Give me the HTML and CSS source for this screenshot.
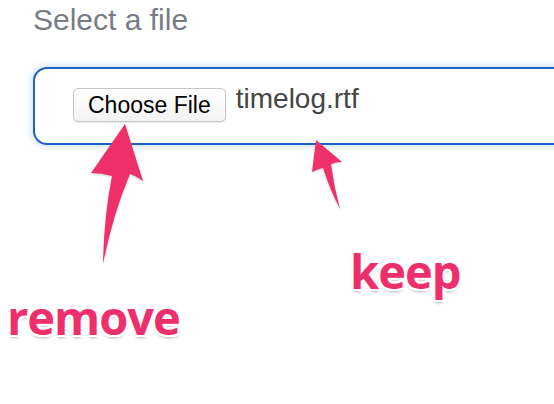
FILE: index.html
```html
<!DOCTYPE html>
<html lang="en">
<head>
    <meta charset="UTF-8">
    <meta name="viewport" content="width=device-width, initial-scale=1.0">
    <title>Select a file</title>
    <link rel="stylesheet" href="styles.css">
</head>
<body>
    <div class="page">
        <h2 class="fieldLabel">Select a file</h2>
        <div class="fileBox">
            <span class="chooseBtn">Choose File</span>
            <span class="fileName">timelog.rtf</span>
        </div>

        <!-- annotation layer -->
        <svg class="arrows" width="554" height="404" viewBox="0 0 554 404">
            <path d="M125,124 L143,181 Q136,176 130,174 Q113,214 103,264 Q104,216 112,176 Q101,173 91,173 Z"/>
            <path d="M316,140 L342,162 Q336,162 331,164 Q334,187 340,209 Q330,190 323,168 Q318,169 312,172 Z"/>
        </svg>
        <span class="note noteRemove">remove</span>
        <span class="note noteKeep">keep</span>
    </div>
</body>
</html>
```

FILE: styles.css
```css
body {
    margin: 0;
    background: #fff;
    font-family: "Liberation Sans", Arial, sans-serif;
    overflow: hidden;
}
.page {
    position: relative;
    width: 554px;
    height: 404px;
    padding: 5px 0 0 33px;
    box-sizing: border-box;
    overflow: hidden;
}
.fieldLabel {
    margin: 0;
    font-size: 30px;
    font-weight: normal;
    line-height: 30px;
    color: #777c86;
}
.fileBox {
    display: flex;
    align-items: flex-start;
    gap: 10px;
    margin-top: 32px;
    margin-right: -40px;
    height: 55px;
    padding: 19px 0 0 38px;
    border: 2px solid #1b63c4;
    border-radius: 14px;
    box-shadow: 0 0 6px 2px rgba(120, 175, 235, 0.35);
}
.chooseBtn {
    display: block;
    height: 32px;
    line-height: 32px;
    padding: 0 14px;
    font-size: 23px;
    color: #000;
    background: linear-gradient(#ffffff, #f3f3f3);
    border: 1px solid #c6c6c6;
    border-radius: 5px;
    box-shadow: 0 1px 1px rgba(0, 0, 0, 0.08);
}
.fileName {
    font-size: 28px;
    line-height: 28px;
    margin-top: -3px;
    color: #454545;
}
.arrows {
    position: absolute;
    top: 0;
    left: 0;
    fill: #f0306b;
    filter: drop-shadow(0 1px 1px rgba(0, 0, 0, 0.18));
}
.note {
    position: absolute;
    font-family: "Open Sans", sans-serif;
    font-weight: bold;
    font-size: 47px;
    line-height: 48px;
    letter-spacing: -1px;
    color: #ef2f6b;
    text-shadow:
        2px 0 0 #fff, -2px 0 0 #fff, 0 2px 0 #fff, 0 -2px 0 #fff,
        2px 2px 0 #fff, -2px 2px 0 #fff, 2px -2px 0 #fff, -2px -2px 0 #fff,
        0 3px 3px rgba(0, 0, 0, 0.3);
}
.noteRemove {
    left: 7px;
    top: 293px;
}
.noteKeep {
    left: 350px;
    top: 247px;
}
```
